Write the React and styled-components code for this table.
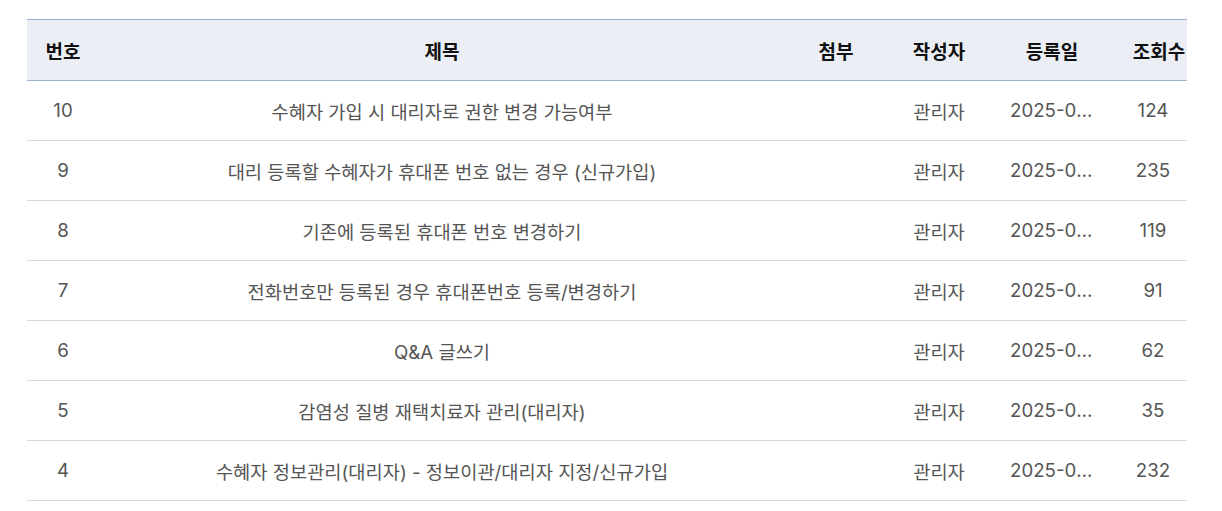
import React from 'react';
import styled, { createGlobalStyle } from 'styled-components';

const GlobalStyle = createGlobalStyle`
  html, body {
    margin: 0;
    padding: 0;
    background: #ffffff;
  }
  body {
    font-family: Inter, "Noto Sans CJK KR", "Noto Sans", sans-serif;
  }
`;

const Page = styled.div`
  padding: 19px 0 0 27px;
`;

const TableWrap = styled.div`
  width: 1160px;
  overflow: hidden;
`;

const Table = styled.table`
  width: 1166px;
  border-collapse: collapse;
  table-layout: fixed;
`;

const HeadRow = styled.tr`
  background: #ebeff5;
  border-top: 1px solid #9bb1cd;
  border-bottom: 1px solid #9bb1cd;
`;

const Th = styled.th`
  height: 60px;
  padding: 0 0 0 ${({ $indent }) => $indent || 0}px;
  font-size: 19px;
  font-weight: 700;
  color: #111;
  text-align: center;
  white-space: nowrap;
`;

const Row = styled.tr`
  border-bottom: 1px solid #d6d6dc;
`;

const Td = styled.td`
  height: 59px;
  padding: 0 ${({ $pad }) => $pad || 0}px;
  font-size: 18.7px;
  color: #555;
  text-align: center;
  white-space: nowrap;
  overflow: hidden;
  text-overflow: ellipsis;
`;

const columns = [
  { label: '번호', width: 72 },
  { label: '제목', width: 686 },
  { label: '첨부', width: 102 },
  { label: '작성자', width: 104 },
  { label: '등록일', width: 122 },
  { label: '조회수', width: 80, indent: 12 },
];

const posts = [
  { no: 10, title: '수혜자 가입 시 대리자로 권한 변경 가능여부', views: 124 },
  { no: 9, title: '대리 등록할 수혜자가 휴대폰 번호 없는 경우 (신규가입)', views: 235 },
  { no: 8, title: '기존에 등록된 휴대폰 번호 변경하기', views: 119 },
  { no: 7, title: '전화번호만 등록된 경우 휴대폰번호 등록/변경하기', views: 91 },
  { no: 6, title: 'Q&A 글쓰기', views: 62 },
  { no: 5, title: '감염성 질병 재택치료자 관리(대리자)', views: 35 },
  { no: 4, title: '수혜자 정보관리(대리자) - 정보이관/대리자 지정/신규가입', views: 232 },
];

const App = () => {
  return (
    <Page>
      <GlobalStyle />
      <TableWrap>
        <Table>
          <colgroup>
            {columns.map((c) => (
              <col key={c.label} style={{ width: c.width }} />
            ))}
          </colgroup>
          <thead>
            <HeadRow>
              {columns.map((c) => (
                <Th key={c.label} $indent={c.indent}>{c.label}</Th>
              ))}
            </HeadRow>
          </thead>
          <tbody>
            {posts.map((p) => (
              <Row key={p.no}>
                <Td>{p.no}</Td>
                <Td>{p.title}</Td>
                <Td></Td>
                <Td>관리자</Td>
                <Td $pad={19}>2025-01-15</Td>
                <Td>{p.views}</Td>
              </Row>
            ))}
          </tbody>
        </Table>
      </TableWrap>
    </Page>
  );
};

export default App;
